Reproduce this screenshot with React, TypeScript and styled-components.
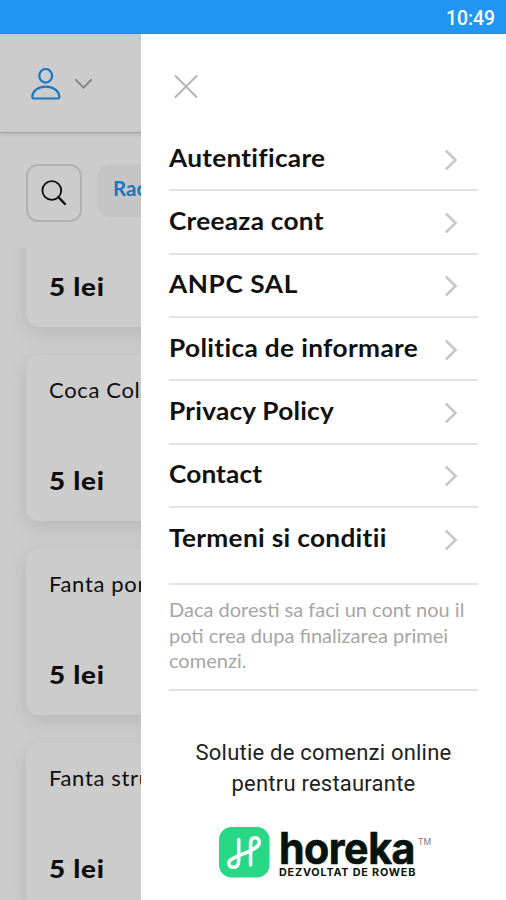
import React from "react";
import styled, { createGlobalStyle } from "styled-components";

const GlobalStyle = createGlobalStyle`
  * { box-sizing: border-box; }
  body { margin: 0; background: #fff; }
`;

const Screen = styled.div`
  width: 506px;
  height: 900px;
  display: flex;
  flex-direction: column;
  overflow: hidden;
  font-family: Lato, sans-serif;
  color: #111;
`;

const StatusBar = styled.div`
  flex: 0 0 34px;
  display: flex;
  align-items: center;
  justify-content: flex-end;
  padding: 4px 11px 0 0;
  background: #2196f3;
  border-bottom: 1px solid #168af0;
  color: #fff;
  font: 500 19.3px Roboto, sans-serif;
`;

const Body = styled.div`
  flex: 1;
  position: relative;
  min-height: 0;
`;

const Shop = styled.main`
  height: 100%;
  display: flex;
  flex-direction: column;
  overflow: hidden;
  background: #fff;
`;

const ShopHeader = styled.header`
  flex: 0 0 99px;
  display: flex;
  align-items: center;
  gap: 14px;
  padding: 1px 0 0 31px;
  border-bottom: 1px solid #cdcdcd;
  box-shadow: 0 1px 4px rgba(0, 0, 0, 0.14);
`;

const FilterBar = styled.div`
  flex: 0 0 115px;
  display: flex;
  align-items: flex-start;
  gap: 15px;
  padding: 31px 0 0 26px;
`;

const SearchButton = styled.button`
  width: 56px;
  height: 58px;
  display: flex;
  align-items: center;
  justify-content: center;
  padding: 0 0 1px;
  border: 2px solid #dedede;
  border-radius: 12px;
  background: #fff;
`;

const CategoryPill = styled.div`
  height: 53px;
  padding: 10px 16px;
  border-radius: 14px;
  background: #f7f7f7;
  color: #2196f3;
  font-size: 20.5px;
  font-weight: 700;
  line-height: 28px;
`;

const ProductList = styled.div`
  flex: 1;
  min-height: 0;
  display: flex;
  flex-direction: column;
  justify-content: flex-end;
  gap: 28px;
  padding: 0 26px;
  margin-bottom: -9px;
  overflow: hidden;
`;

const ProductCard = styled.article`
  flex: 0 0 166px;
  display: flex;
  flex-direction: column;
  justify-content: space-between;
  padding: 21px 23px 25px;
  border-radius: 13px;
  background: #fff;
  box-shadow: 0 6px 20px rgba(0, 0, 0, 0.1);
`;

const ProductName = styled.div`
  font-size: 22px;
  line-height: 28px;
  letter-spacing: 0.65px;
`;

const Price = styled.div`
  font-size: 25.5px;
  font-weight: 900;
  line-height: 32px;
  letter-spacing: 0.7px;
  transform: scaleX(1.09);
  transform-origin: left;
`;

const Backdrop = styled.div`
  position: absolute;
  inset: 0;
  display: flex;
  justify-content: flex-end;
  background: rgba(0, 0, 0, 0.2);
`;

const Drawer = styled.aside`
  width: 365px;
  height: 100%;
  padding: 38px 28px 0;
  background: #fff;
  display: flex;
  flex-direction: column;
`;

const CloseButton = styled.button`
  width: 32px;
  height: 28px;
  padding: 0 0 0 5px;
  border: 0;
  background: none;
  display: flex;
  align-items: center;
`;

const Menu = styled.nav`
  margin-top: 28px;
  display: flex;
  flex-direction: column;
  border-bottom: 2px solid #e3e3e3;
  padding-bottom: 12px;
`;

const MenuItem = styled.a`
  height: 63.35px;
  display: flex;
  align-items: center;
  justify-content: space-between;
  padding-right: 20px;
  border-bottom: 2px solid #e3e3e3;
  &:last-child { border-bottom-color: transparent; }
`;

const MenuLabel = styled.span<{ $tracking: number }>`
  padding-bottom: 2px;
  font-size: 24.5px;
  font-weight: 700;
  line-height: 30px;
  letter-spacing: ${(p) => p.$tracking}px;
  white-space: nowrap;
  transform: scaleX(1.07);
  transform-origin: left;
`;

const Note = styled.p`
  margin: 0;
  padding: 12px 0 15px;
  border-bottom: 2px solid #e0e0e0;
  color: #a6a6a6;
  font-size: 20px;
  line-height: 25.4px;
`;

const NoteLine = styled.span`
  display: block;
  white-space: nowrap;
`;

const Tagline = styled.p`
  margin: 46px 0 0;
  color: #222;
  text-align: center;
  font: 400 22px/31px Roboto, sans-serif;
  letter-spacing: 0.22px;
`;

const Brand = styled.div`
  display: flex;
  margin: 28px 0 0 50px;
  gap: 8px;
  color: #06140d;
  font-family: Inter, sans-serif;
`;

const Wordmark = styled.div`
  width: 139px;
  display: flex;
  flex-direction: column;
`;

const BrandName = styled.div`
  height: 40px;
  font-size: 43.5px;
  font-weight: 700;
  line-height: 42px;
  letter-spacing: -0.5px;
  -webkit-text-stroke: 0.7px #06140d;
  transform: scaleX(0.945);
  transform-origin: left;
`;

const BrandNote = styled.div`
  font-size: 10.8px;
  font-weight: 700;
  line-height: 11px;
  letter-spacing: 0.8px;
  white-space: nowrap;
`;

const TradeMark = styled.div`
  margin: 10px 0 0 -8px;
  color: #777;
  font-size: 8.5px;
  line-height: 10px;
`;

const UserIcon = () => (
  <svg width="30" height="32" viewBox="0 0 30 32" fill="none" stroke="#2196f3" strokeWidth="2.2">
    <ellipse cx="14.7" cy="7.8" rx="6.4" ry="6.8" />
    <path d="M1.3 28.4C1.8 22.8 7 18.7 14.7 18.7S27.8 22.8 28.3 28.4C28.4 29.7 27.7 30.5 26.5 30.5H3.1C1.9 30.5 1.2 29.7 1.3 28.4Z" />
  </svg>
);

const CaretIcon = () => (
  <svg width="17" height="10" viewBox="0 0 17 10" fill="none" stroke="#aaa" strokeWidth="2" strokeLinecap="round">
    <path d="M1 1L8.5 8.6L16 1" />
  </svg>
);

const SearchIcon = () => (
  <svg width="26" height="26" viewBox="0 0 26 26" fill="none" stroke="#111">
    <circle cx="10.8" cy="10.5" r="9.4" strokeWidth="1.8" />
    <path d="M17.4 17.2L24 24" strokeWidth="2.4" strokeLinecap="round" />
  </svg>
);

const CloseIcon = () => (
  <svg width="25" height="25" viewBox="0 0 25 25" fill="none" stroke="#b5b5b5" strokeWidth="2" strokeLinecap="round">
    <path d="M1.5 2L22.5 23M22.5 2L1.5 23" />
  </svg>
);

const ChevronIcon = () => (
  <svg width="14" height="22" viewBox="0 0 14 22" fill="none" stroke="#c8c8c8" strokeWidth="2.6">
    <path d="M1.8 2.5L11.6 12L1.8 21.5" />
  </svg>
);

const BrandIcon = () => (
  <svg width="52" height="52" viewBox="0 0 52 52" fill="none" stroke="#fff" strokeWidth="3.6" strokeLinecap="round" strokeLinejoin="round">
    <rect x="0" y="0" width="50.5" height="50.5" rx="12.5" fill="#27d986" stroke="none" />
    <path d="M19.7 12.5V33.5C19.7 38 17.6 40.3 14.5 40.3C11.3 40.3 9.4 38.3 9.9 35.3C11 29.3 39.3 24.5 40.2 16C40.5 12.4 38.8 10.8 36.2 10.8C33.2 10.8 31.6 13 31.6 16.3V38" />
  </svg>
);

const menu = [
  { label: "Autentificare", tracking: 0.26 },
  { label: "Creeaza cont", tracking: 0.25 },
  { label: "ANPC SAL", tracking: 0.55 },
  { label: "Politica de informare", tracking: 0.34 },
  { label: "Privacy Policy", tracking: 0.22 },
  { label: "Contact", tracking: 0.12 },
  { label: "Termeni si conditii", tracking: 0.3 },
];

const products = ["Coca Cola Zero", "Coca Cola", "Fanta portocale", "Fanta struguri"];

export default function App() {
  return (
    <>
      <GlobalStyle />
      <Screen>
        <StatusBar>10:49</StatusBar>
        <Body>
          <Shop>
            <ShopHeader>
              <UserIcon />
              <CaretIcon />
            </ShopHeader>
            <FilterBar>
              <SearchButton aria-label="Cauta">
                <SearchIcon />
              </SearchButton>
              <CategoryPill>Racoritoare</CategoryPill>
            </FilterBar>
            <ProductList>
              {products.map((name) => (
                <ProductCard key={name}>
                  <ProductName>{name}</ProductName>
                  <Price>5 lei</Price>
                </ProductCard>
              ))}
            </ProductList>
          </Shop>
          <Backdrop>
            <Drawer>
              <CloseButton aria-label="Inchide">
                <CloseIcon />
              </CloseButton>
              <Menu>
                {menu.map((item) => (
                  <MenuItem key={item.label}>
                    <MenuLabel $tracking={item.tracking}>{item.label}</MenuLabel>
                    <ChevronIcon />
                  </MenuItem>
                ))}
              </Menu>
              <Note>
                <NoteLine>Daca doresti sa faci un cont nou il</NoteLine>
                <NoteLine>poti crea dupa finalizarea primei</NoteLine>
                <NoteLine>comenzi.</NoteLine>
              </Note>
              <Tagline>
                Solutie de comenzi online
                <br />
                pentru restaurante
              </Tagline>
              <Brand>
                <BrandIcon />
                <Wordmark>
                  <BrandName>horeka</BrandName>
                  <BrandNote>DEZVOLTAT DE ROWEB</BrandNote>
                </Wordmark>
                <TradeMark>TM</TradeMark>
              </Brand>
            </Drawer>
          </Backdrop>
        </Body>
      </Screen>
    </>
  );
}
